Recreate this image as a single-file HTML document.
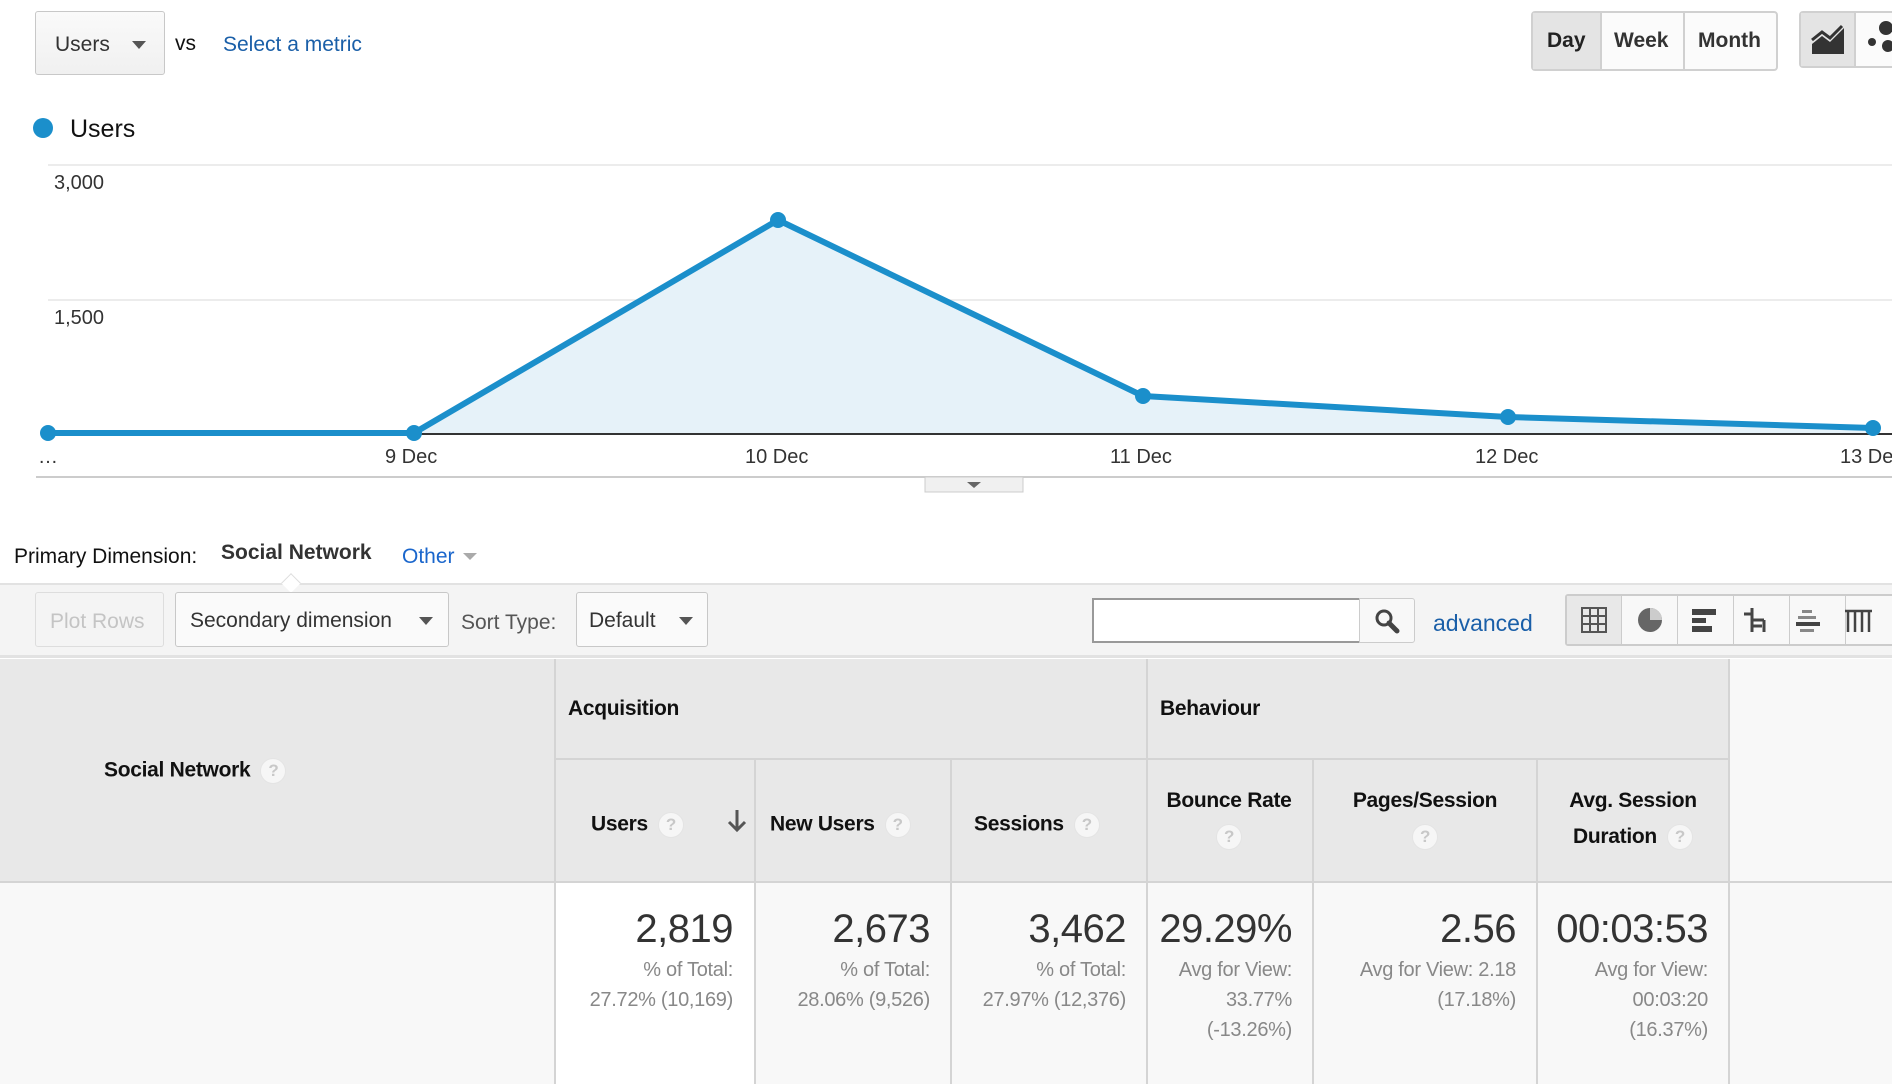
<!DOCTYPE html>
<html><head><meta charset="utf-8"><style>
*{margin:0;padding:0;box-sizing:border-box}
body{width:1892px;height:1084px;overflow:hidden;background:#fff;font-family:"Liberation Sans",sans-serif;color:#222;position:relative}
.a{position:absolute;white-space:nowrap}
.btn{position:absolute;border:1px solid #c8c8c8;border-radius:3px;background:linear-gradient(#fafafa,#f0f0f0)}
.car{display:inline-block;width:0;height:0;border-left:7px solid transparent;border-right:7px solid transparent;border-top:8px solid #555}
.q{display:inline-block;width:26px;height:26px;border-radius:50%;background:#f6f6f6;border:1px solid #e4e4e4;color:#c8c8c8;font-size:17px;text-align:center;line-height:24px;font-weight:bold;vertical-align:middle;margin-left:10px}
.hd{position:absolute;font-weight:bold;font-size:21px;color:#111;letter-spacing:-0.3px}
.num{position:absolute;text-align:right;font-size:40px;color:#333;letter-spacing:-0.5px}
.sub{position:absolute;text-align:right;font-size:20px;color:#888;line-height:30px;letter-spacing:-0.3px}
.vl{position:absolute;width:2px;background:#d4d4d4}
</style></head><body>
<div class="btn" style="left:35px;top:11px;width:130px;height:64px"></div>
<div class="a" style="left:55px;top:33px;font-size:21px;color:#333">Users</div>
<div class="a" style="left:132px;top:36px"><span class="car"></span></div>
<div class="a" style="left:175px;top:32px;font-size:21px;color:#111">vs</div>
<div class="a" style="left:223px;top:33px;font-size:21px;color:#1a5fa8">Select a metric</div>

<div class="a" style="left:1531px;top:11px;width:247px;height:60px;border:2px solid #d0d0d0;border-radius:4px;background:#fbfbfb"></div>
<div class="a" style="left:1533px;top:13px;width:67px;height:56px;background:#e4e4e4"></div>
<div class="a" style="left:1600px;top:13px;width:2px;height:56px;background:#d0d0d0"></div>
<div class="a" style="left:1683px;top:13px;width:2px;height:56px;background:#d0d0d0"></div>
<div class="a" style="left:1547px;top:29px;font-size:21px;font-weight:bold;color:#222">Day</div>
<div class="a" style="left:1614px;top:29px;font-size:21px;font-weight:bold;color:#333">Week</div>
<div class="a" style="left:1698px;top:29px;font-size:21px;font-weight:bold;color:#333">Month</div>
<div class="a" style="left:1799px;top:11px;width:120px;height:57px;border:2px solid #d0d0d0;border-radius:4px;background:#fbfbfb"></div>
<div class="a" style="left:1801px;top:13px;width:55px;height:53px;background:#e4e4e4;border-right:2px solid #d0d0d0"></div>
<svg class="a" style="left:1810px;top:22px" width="36" height="34"><path d="M2 32 L2 22 L12 14 L20 20 L34 6 L34 32Z" fill="#333"/><path d="M2 18 L12 10 L20 16 L32 4" stroke="#333" stroke-width="3" fill="none"/></svg>
<svg class="a" style="left:1866px;top:20px" width="26" height="36"><circle cx="20" cy="8" r="7" fill="#333"/><circle cx="6" cy="22" r="4" fill="#333"/><circle cx="22" cy="26" r="6" fill="#333"/></svg>

<div class="a" style="left:33px;top:118px;width:20px;height:20px;border-radius:50%;background:#1b8fcb"></div>
<div class="a" style="left:70px;top:115px;font-size:25px;color:#111">Users</div>

<svg class="a" style="left:0;top:150px" width="1892" height="350">
<line x1="48" y1="15" x2="1892" y2="15" stroke="#e6e6e6" stroke-width="1.5"/>
<line x1="48" y1="150" x2="1892" y2="150" stroke="#e6e6e6" stroke-width="1.5"/>
<polygon points="48,283 414,283 778,70 1143,246 1508,267 1873,278 1873,284 48,284" fill="#e6f2f9"/>
<line x1="48" y1="284" x2="1892" y2="284" stroke="#333" stroke-width="2"/>
<polyline points="48,283 414,283 778,70 1143,246 1508,267 1873,278" fill="none" stroke="#1b8fcb" stroke-width="6" stroke-linejoin="round"/>
<g fill="#1b8fcb"><circle cx="48" cy="283" r="8"/><circle cx="414" cy="283" r="8"/><circle cx="778" cy="70" r="8"/><circle cx="1143" cy="246" r="8"/><circle cx="1508" cy="267" r="8"/><circle cx="1873" cy="278" r="8"/></g>
<line x1="36" y1="327" x2="1892" y2="327" stroke="#ccc" stroke-width="2"/>
<rect x="925" y="327" width="98" height="15" fill="#f0f0f0" stroke="#ccc"/>
<polygon points="967,332 981,332 974,338" fill="#666"/>
</svg>
<div class="a" style="left:54px;top:172px;font-size:20px;color:#333">3,000</div>
<div class="a" style="left:54px;top:307px;font-size:20px;color:#333">1,500</div>
<div class="a" style="left:38px;top:446px;font-size:20px;color:#333">…</div>
<div class="a" style="left:385px;top:446px;font-size:20px;color:#333">9 Dec</div>
<div class="a" style="left:745px;top:446px;font-size:20px;color:#333">10 Dec</div>
<div class="a" style="left:1110px;top:446px;font-size:20px;color:#333">11 Dec</div>
<div class="a" style="left:1475px;top:446px;font-size:20px;color:#333">12 Dec</div>
<div class="a" style="left:1840px;top:446px;font-size:20px;color:#333">13 Dec</div>

<div class="a" style="left:14px;top:545px;font-size:21px;color:#111">Primary Dimension:</div>
<div class="a" style="left:221px;top:541px;font-size:21px;font-weight:bold;color:#333">Social Network</div>
<div class="a" style="left:402px;top:545px;font-size:21px;color:#1a66cc">Other</div>
<div class="a" style="left:463px;top:553px;border-left:7px solid transparent;border-right:7px solid transparent;border-top:7px solid #aaa"></div>

<div class="a" style="left:0;top:583px;width:1892px;height:75px;background:#f4f4f4;border-top:2px solid #e2e2e2;border-bottom:3px solid #e2e2e2"></div>
<div class="a" style="left:284px;top:576px;width:14px;height:14px;background:#fff;border-left:1px solid #ddd;border-top:1px solid #ddd;transform:rotate(45deg)"></div>
<div class="btn" style="left:35px;top:592px;width:129px;height:55px;border-color:#ddd;background:#f4f4f4"></div>
<div class="a" style="left:50px;top:610px;font-size:21px;color:#c4c4c4">Plot Rows</div>
<div class="btn" style="left:175px;top:592px;width:274px;height:55px;background:#fafafa"></div>
<div class="a" style="left:190px;top:609px;font-size:21px;color:#333">Secondary dimension</div>
<div class="a" style="left:419px;top:612px"><span class="car"></span></div>
<div class="a" style="left:461px;top:611px;font-size:21px;color:#555">Sort Type:</div>
<div class="btn" style="left:576px;top:592px;width:132px;height:55px;background:#fafafa"></div>
<div class="a" style="left:589px;top:609px;font-size:21px;color:#333">Default</div>
<div class="a" style="left:679px;top:612px"><span class="car"></span></div>
<div class="a" style="left:1092px;top:598px;width:268px;height:45px;background:#fff;border:2px solid #999;border-right:1px solid #ccc"></div>
<div class="a" style="left:1359px;top:598px;width:56px;height:45px;background:#f8f8f8;border:1px solid #ccc;border-radius:0 3px 3px 0"></div>
<svg class="a" style="left:1374px;top:608px" width="26" height="26"><circle cx="10" cy="10" r="7" stroke="#444" stroke-width="3" fill="none"/><line x1="15" y1="15" x2="23" y2="23" stroke="#444" stroke-width="5" stroke-linecap="round"/></svg>
<div class="a" style="left:1433px;top:610px;font-size:23px;color:#1a5fa8">advanced</div>
<div class="a" style="left:1565px;top:594px;width:340px;height:52px;border:2px solid #ccc;border-radius:3px;background:#f8f8f8"></div>
<div class="a" style="left:1567px;top:596px;width:54px;height:48px;background:#e8e8e8"></div>
<div class="a" style="left:1621px;top:596px;width:1px;height:48px;background:#ccc"></div>
<div class="a" style="left:1677px;top:596px;width:1px;height:48px;background:#ccc"></div>
<div class="a" style="left:1733px;top:596px;width:1px;height:48px;background:#ccc"></div>
<div class="a" style="left:1789px;top:596px;width:1px;height:48px;background:#ccc"></div>
<div class="a" style="left:1845px;top:596px;width:1px;height:48px;background:#ccc"></div>
<svg class="a" style="left:1580px;top:606px" width="300" height="30">
<g stroke="#555" stroke-width="2" fill="none"><rect x="2" y="2" width="24" height="24"/><line x1="10" y1="2" x2="10" y2="26"/><line x1="18" y1="2" x2="18" y2="26"/><line x1="2" y1="10" x2="26" y2="10"/><line x1="2" y1="18" x2="26" y2="18"/></g>
<circle cx="70" cy="14" r="12" fill="#666"/><path d="M70 2 A12 12 0 0 1 82 14 L70 14Z" fill="#ccc"/>
<rect x="112" y="3" width="24" height="6" fill="#444"/><rect x="112" y="12" width="14" height="5" fill="#444"/><rect x="112" y="20" width="20" height="6" fill="#444"/>
<path d="M172 2 V26 M164 8 H172 M172 14 H184 M172 20 H182 M184 14 V26" stroke="#444" stroke-width="3" fill="none"/>
<g fill="#888"><rect x="222" y="4" width="10" height="3"/><rect x="218" y="10" width="18" height="3"/><rect x="216" y="16" width="24" height="4" fill="#444"/><rect x="220" y="23" width="14" height="3"/></g>
<g stroke="#444" stroke-width="2.5"><line x1="268" y1="4" x2="268" y2="26"/><line x1="275" y1="4" x2="275" y2="26"/><line x1="282" y1="4" x2="282" y2="26"/><line x1="289" y1="4" x2="289" y2="26"/><line x1="265" y1="5" x2="292" y2="5"/></g>
</svg>

<div class="a" style="left:0;top:659px;width:1729px;height:222px;background:#e8e8e8"></div>
<div class="a" style="left:0;top:881px;width:1892px;height:203px;background:#f8f8f8;border-top:2px solid #d4d4d4"></div>
<div class="a" style="left:1729px;top:659px;width:163px;height:222px;background:#f8f8f8"></div>
<div class="a" style="left:555px;top:881px;width:200px;height:203px;background:#fff;border-top:2px solid #d4d4d4"></div>
<div class="a" style="left:555px;top:758px;width:1174px;height:2px;background:#d4d4d4"></div>
<div class="vl" style="left:554px;top:659px;height:425px"></div>
<div class="vl" style="left:1146px;top:659px;height:425px"></div>
<div class="vl" style="left:1728px;top:659px;height:425px"></div>
<div class="vl" style="left:754px;top:759px;height:325px"></div>
<div class="vl" style="left:950px;top:759px;height:325px"></div>
<div class="vl" style="left:1312px;top:759px;height:325px"></div>
<div class="vl" style="left:1536px;top:759px;height:325px"></div>

<div class="hd" style="left:104px;top:758px">Social Network<span class="q">?</span></div>
<div class="hd" style="left:568px;top:697px">Acquisition</div>
<div class="hd" style="left:1160px;top:697px">Behaviour</div>
<div class="hd" style="left:591px;top:812px">Users<span class="q">?</span></div>
<svg class="a" style="left:725px;top:808px" width="24" height="26"><path d="M12 2 V22 M4 14 L12 22 L20 14" stroke="#555" stroke-width="3" fill="none"/></svg>
<div class="hd" style="left:770px;top:812px">New Users<span class="q">?</span></div>
<div class="hd" style="left:974px;top:812px">Sessions<span class="q">?</span></div>
<div class="hd" style="left:1146px;top:783px;width:166px;text-align:center;line-height:36px">Bounce Rate<br><span class="q" style="margin:0">?</span></div>
<div class="hd" style="left:1313px;top:783px;width:224px;text-align:center;line-height:36px">Pages/Session<br><span class="q" style="margin:0">?</span></div>
<div class="hd" style="left:1537px;top:783px;width:192px;text-align:center;line-height:36px">Avg. Session<br>Duration<span class="q">?</span></div>

<div class="num" style="left:555px;width:178px;top:907px">2,819</div>
<div class="sub" style="left:555px;width:178px;top:955px">% of Total:<br>27.72% (10,169)</div>
<div class="num" style="left:755px;width:175px;top:907px">2,673</div>
<div class="sub" style="left:755px;width:175px;top:955px">% of Total:<br>28.06% (9,526)</div>
<div class="num" style="left:951px;width:175px;top:907px">3,462</div>
<div class="sub" style="left:951px;width:175px;top:955px">% of Total:<br>27.97% (12,376)</div>
<div class="num" style="left:1146px;width:146px;top:907px">29.29%</div>
<div class="sub" style="left:1146px;width:146px;top:955px">Avg for View:<br>33.77%<br>(-13.26%)</div>
<div class="num" style="left:1313px;width:203px;top:907px">2.56</div>
<div class="sub" style="left:1313px;width:203px;top:955px">Avg for View: 2.18<br>(17.18%)</div>
<div class="num" style="left:1537px;width:171px;top:907px">00:03:53</div>
<div class="sub" style="left:1537px;width:171px;top:955px">Avg for View:<br>00:03:20<br>(16.37%)</div>
</body></html>
